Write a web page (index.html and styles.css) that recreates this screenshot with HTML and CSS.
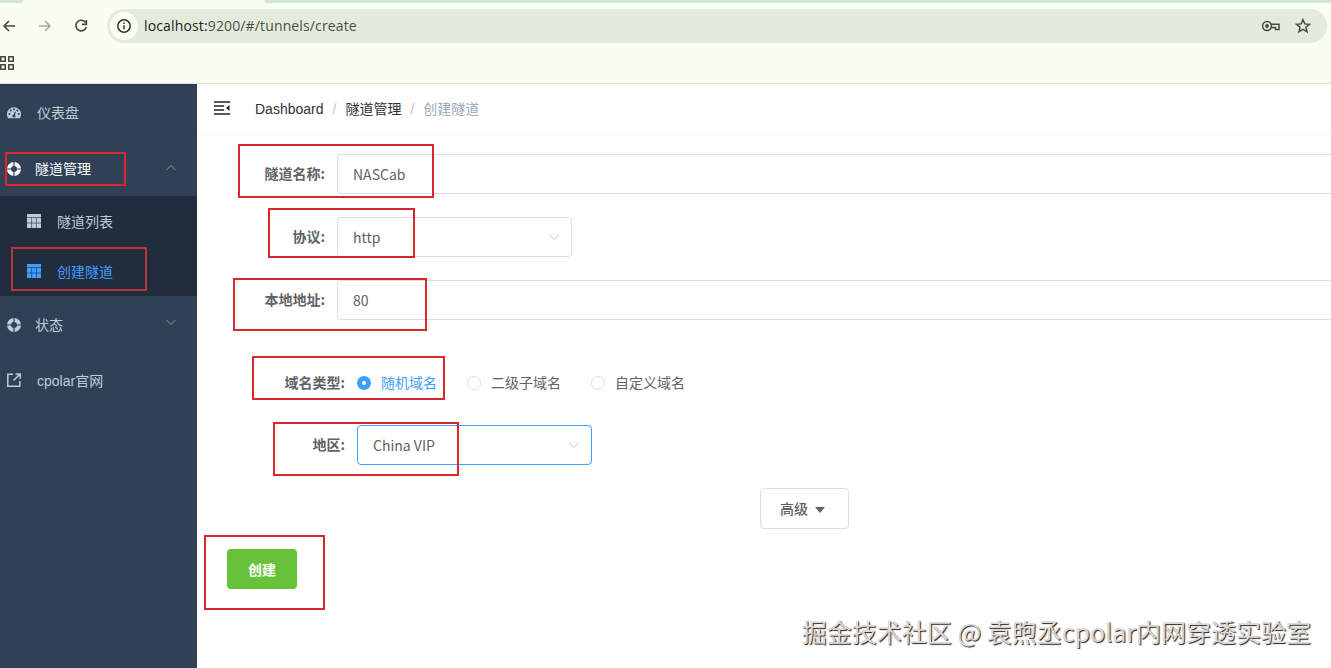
FILE: index.html
```html
<!DOCTYPE html>
<html lang="zh-CN">
<head>
    <meta charset="UTF-8">
    <meta name="viewport" content="width=device-width, initial-scale=1.0">
    <title>创建隧道</title>
    <link rel="stylesheet" href="styles.css">
</head>
<body>
    <div class="browser">
        <div class="tab-strip"><span class="tab"></span></div>
        <div class="toolbar">
            <svg class="nav-icon" viewBox="0 0 16 16"><path d="M14 8H3M8 3L3 8l5 5"/></svg>
            <svg class="nav-icon disabled" viewBox="0 0 16 16"><path d="M2 8h11M8 3l5 5-5 5"/></svg>
            <svg class="nav-icon" viewBox="0 0 16 16"><path d="M12.6 4.6A5.3 5.3 0 1 0 13.3 9M13.4 2v4.4H9"/></svg>
            <div class="address">
                <span class="site-info">
                    <svg viewBox="0 0 16 16"><circle cx="8" cy="8" r="6.2"/><path d="M8 7.2v4M8 4.5v1.5"/></svg>
                </span>
                <span class="url"><b>localhost:</b>9200/#/tunnels/create</span>
                <svg class="key-icon" viewBox="0 0 20 14"><circle cx="6" cy="7" r="4.4"/><circle class="dot" cx="6" cy="7" r="1.9"/><path d="M10 5.3h8v5.3h-3.6V8.6H10"/></svg>
                <svg class="star-icon" viewBox="0 0 16 16"><path d="M8 1.7l1.8 4.2 4.6.4-3.5 3 1.1 4.5L8 11.4l-4 2.4 1.1-4.5-3.5-3 4.6-.4z"/></svg>
            </div>
        </div>
        <div class="bookmarks">
            <svg viewBox="0 0 15 15"><path d="M.8 .8h4.400v4.400H.8zM8.800 .8h4.400v4.400H8.800zM.8 8.800h4.400v4.400H.8zM8.800 8.800h4.400v4.400H8.800z"/></svg>
        </div>
    </div>

    <div class="app">
        <div class="sidebar">
            <div class="menu-item wide">
                <svg class="menu-icon" viewBox="0 0 14 14"><path d="M0 8.3a7 7 0 0 1 14 0c0 1.4-.4 2.7-1.1 3.9H1.100A7 7 0 0 1 0 8.300z"/><g class="cut"><circle cx="2.4" cy="8" r="1"/><circle cx="3.8" cy="4.600" r="1"/><circle cx="7" cy="3.200" r="1"/><circle cx="10.300" cy="4.600" r="1"/><circle cx="11.700" cy="8" r="1"/><circle cx="7" cy="10" r="1.600"/></g><path class="cut-line" d="M7 10l1.200-4.500"/></svg>
                <span>仪表盘</span>
            </div>
            <div class="menu-item open">
                <svg class="menu-icon" viewBox="0 0 14 14"><circle class="ring" cx="7" cy="7" r="5"/><path class="cut-line" d="M7 0v4M7 10v4M0 7h4M10 7h4"/></svg>
                <span>隧道管理</span>
                <svg class="arrow" viewBox="0 0 12 12"><path d="M1.500 8L6 3.500 10.500 8"/></svg>
            </div>
            <div class="submenu">
                <div class="sub-item">
                    <svg class="menu-icon" viewBox="0 0 14 14"><path d="M0 0h14v14H0z"/><path class="grid-line" d="M0 3.500h14M0 9h14M4.600 3.500V14M9.400 3.500V14"/></svg>
                    <span>隧道列表</span>
                </div>
                <div class="sub-item active">
                    <svg class="menu-icon" viewBox="0 0 14 14"><path d="M0 0h14v14H0z"/><path class="grid-line" d="M0 3.500h14M0 9h14M4.600 3.500V14M9.400 3.500V14"/></svg>
                    <span>创建隧道</span>
                </div>
            </div>
            <div class="menu-item">
                <svg class="menu-icon" viewBox="0 0 14 14"><circle class="ring" cx="7" cy="7" r="5"/><path class="cut-line" d="M7 0v4M7 10v4M0 7h4M10 7h4"/></svg>
                <span>状态</span>
                <svg class="arrow" viewBox="0 0 12 12"><path d="M1.500 2L6 6.500 10.500 2"/></svg>
            </div>
            <div class="menu-item wide">
                <svg class="menu-icon link" viewBox="0 0 14 14"><path d="M6 1.200H.8v12h12V8M8.500 1h4.700v4.700M13 1L6.500 7.500"/></svg>
                <span>cpolar官网</span>
            </div>
        </div>

        <div class="main">
            <div class="navbar">
                <svg class="fold" viewBox="0 0 16 14"><path d="M0 1h16M0 5h10M0 9h10M0 13h16"/><path class="tri" d="M15.500 4v6L12 7z"/></svg>
                <div class="breadcrumb">
                    <span>Dashboard</span><i>/</i><span>隧道管理</span><i>/</i><span class="current">创建隧道</span>
                </div>
            </div>
            <div class="form">
                <div class="row">
                    <label>隧道名称:</label>
                    <div class="input long">NASCab</div>
                </div>
                <div class="row">
                    <label>协议:</label>
                    <div class="input select">http<svg class="arrow" viewBox="0 0 12 12"><path d="M1 3.500l5 5 5-5"/></svg></div>
                </div>
                <div class="row">
                    <label>本地地址:</label>
                    <div class="input long">80</div>
                </div>
                <div class="inner">
                    <div class="row">
                        <label>域名类型:</label>
                        <div class="radio checked"><span class="circle"></span><span class="text">随机域名</span></div>
                        <div class="radio"><span class="circle"></span><span class="text">二级子域名</span></div>
                        <div class="radio"><span class="circle"></span><span class="text">自定义域名</span></div>
                    </div>
                    <div class="row">
                        <label>地区:</label>
                        <div class="input select focus">China VIP<svg class="arrow" viewBox="0 0 12 12"><path d="M1 3.500l5 5 5-5"/></svg></div>
                    </div>
                </div>
                <div class="advanced"><span>高级</span><span class="caret"></span></div>
                <div class="create">创建</div>
            </div>
        </div>
    </div>

    <!-- highlight frames over the page -->
    <div class="mark mark-menu"></div>
    <div class="mark mark-submenu"></div>
    <div class="mark mark-name"></div>
    <div class="mark mark-protocol"></div>
    <div class="mark mark-address"></div>
    <div class="mark mark-domain"></div>
    <div class="mark mark-region"></div>
    <div class="mark mark-create"></div>
    <div class="watermark">掘金技术社区 @ 袁煦丞cpolar内网穿透实验室</div>
</body>
</html>
```
FILE: styles.css
```css
* {
    box-sizing: border-box;
}
body {
    margin: 0;
    width: 1331px;
    height: 668px;
    overflow: hidden;
    position: relative;
    background: #fff;
    font-family: "Liberation Sans", "Noto Sans CJK SC", sans-serif;
    font-size: 14px;
}
svg {
    fill: none;
    flex: none;
}

/* browser bars */
.browser {
    height: 84px;
    background: #f9fdf2;
    border-bottom: 1px solid #dde1da;
}
.tab-strip {
    height: 3px;
    background: #d3e8d4;
    padding-left: 22px;
}
.tab {
    display: block;
    width: 243px;
    height: 3px;
    background: #f9fdf2;
    border-radius: 3px 3px 0 0;
}
.toolbar {
    display: flex;
    align-items: center;
    height: 46px;
    padding: 0 4px 0 1px;
}
.nav-icon {
    width: 16px;
    height: 16px;
    margin-right: 20px;
    stroke: #41483f;
    stroke-width: 1.6;
}
.nav-icon.disabled {
    stroke: #a9aea5;
}
.nav-icon:nth-child(3) {
    margin-right: 18px;
}
.address {
    display: flex;
    align-items: center;
    flex: 1;
    height: 34px;
    border-radius: 17px;
    background: #e3ebdd;
    padding: 0 16px 0 3px;
}
.site-info {
    display: flex;
    align-items: center;
    justify-content: center;
    width: 28px;
    height: 28px;
    border-radius: 50%;
    background: #f9fdf2;
}
.site-info svg {
    width: 16px;
    height: 16px;
    stroke: #2e332c;
    stroke-width: 1.5;
}
.url {
    flex: 1;
    margin-left: 6px;
    padding-bottom: 2px;
    font-family: "Open Sans", "Noto Sans", sans-serif;
    font-size: 14px;
    letter-spacing: .14px;
    color: #4a5046;
}
.url b {
    font-weight: normal;
    color: #1d211b;
}
.key-icon, .star-icon {
    stroke: #454a42;
    stroke-width: 1.5;
}
.key-icon {
    width: 20px;
    height: 14px;
    margin-right: 14px;
}
.key-icon .dot {
    fill: #454a42;
    stroke: none;
}
.star-icon {
    width: 16px;
    height: 16px;
}
.bookmarks {
    padding-top: 7px;
}
.bookmarks svg {
    display: block;
    width: 15px;
    height: 15px;
    stroke: #454a42;
    stroke-width: 1.6;
}

.app {
    display: flex;
    height: 584px;
}

/* sidebar */
.sidebar {
    width: 197px;
    background: #304156;
    color: #bfcbd9;
}
.sidebar span {
    padding-bottom: 2px;
}
.menu-item {
    display: flex;
    align-items: center;
    height: 56px;
    padding: 2px 20px 0 7px;
}
.menu-icon {
    width: 14px;
    height: 14px;
    margin-right: 14px;
    fill: currentColor;
}
.wide .menu-icon {
    margin-right: 16px;
}
.menu-item .menu-icon.link {
    margin-bottom: 2px;
    fill: none;
    stroke: currentColor;
    stroke-width: 1.5;
}
.menu-icon .ring {
    fill: none;
    stroke: currentColor;
    stroke-width: 4;
}
.menu-icon .cut {
    fill: #304156;
}
.menu-icon .cut-line {
    stroke: #304156;
    stroke-width: 1.2;
}
.menu-icon .grid-line {
    stroke: #1f2d3d;
    stroke-width: .6;
}
.menu-item.open {
    color: #fff;
}
.arrow {
    width: 12px;
    height: 12px;
    margin-left: auto;
    stroke: #909399;
    stroke-width: 1;
}
.sidebar .arrow {
    margin-bottom: 2px;
}
.submenu {
    background: #1f2d3d;
}
.sub-item {
    display: flex;
    align-items: center;
    height: 50px;
    padding-left: 27px;
}
.sub-item .menu-icon {
    margin-right: 16px;
}
.sub-item span {
    padding-bottom: 1px;
}
.sub-item.active {
    color: #409eff;
}

/* main area */
.main {
    flex: 1;
    min-width: 0;
}
.navbar {
    display: flex;
    align-items: center;
    height: 51px;
    padding-left: 17px;
    border-bottom: 1px solid #f4f5f6;
}
.fold {
    width: 16px;
    height: 14px;
    margin-bottom: 2px;
    stroke: #222;
    stroke-width: 1.7;
}
.fold .tri {
    fill: #222;
    stroke: none;
}
.breadcrumb {
    margin-left: 25px;
    padding-bottom: 2px;
    color: #303133;
}
.breadcrumb i {
    margin: 0 9px;
    color: #c0c4cc;
    font-style: normal;
}
.breadcrumb .current {
    color: #97a8be;
}
.form {
    padding: 19px 0 0 30px;
    font-family: "Noto Sans CJK SC", sans-serif;
    color: #606266;
}
.row {
    display: flex;
    align-items: center;
    height: 40px;
    margin-bottom: 23px;
}
.row label {
    width: 98px;
    margin-right: 12px;
    padding-bottom: 2px;
    text-align: right;
    font-weight: 700;
}
.input {
    display: flex;
    align-items: center;
    height: 40px;
    padding: 0 11px 0 15px;
    border: 1px solid #dcdfe6;
    border-radius: 4px;
}
.input .arrow {
    stroke: #c0c4cc;
}
.input.long {
    flex: 1;
    border-right: none;
    border-radius: 4px 0 0 4px;
}
.input.select {
    width: 235px;
}
.input.focus {
    border-color: #409eff;
}
.inner {
    padding: 20px 0 0 20px;
}
.inner .row {
    margin-bottom: 22px;
}
.radio {
    display: flex;
    align-items: center;
    margin-right: 30px;
}
.radio .text {
    padding-bottom: 2px;
}
.circle {
    width: 14px;
    height: 14px;
    margin-right: 10px;
    border: 1px solid #dcdfe6;
    border-radius: 50%;
}
.checked {
    color: #409eff;
}
.checked .circle {
    border: 5px solid #409eff;
}
.advanced {
    display: flex;
    align-items: center;
    justify-content: center;
    width: 89px;
    height: 41px;
    margin: 1px 0 20px 533px;
    padding: 0 4px 1px 0;
    border: 1px solid #dcdfe6;
    border-radius: 4px;
    font-weight: 500;
}
.inner + .advanced {
    margin-top: 23px;
}
.inner .row:last-child {
    margin-bottom: 0;
}
.caret {
    margin: 3px 0 0 7px;
    border: 5px solid transparent;
    border-top: 6px solid #606266;
    border-bottom: none;
}
.create {
    width: 70px;
    height: 40px;
    border-radius: 4px;
    background: #67c23a;
    color: #fff;
    font-weight: 700;
    line-height: 40px;
    text-align: center;
}

/* red frames */
.mark {
    position: absolute;
    border: 2px solid #d9272e;
}
.mark-menu { left: 5px; top: 152px; width: 121px; height: 34px; }
.mark-submenu { left: 11px; top: 247px; width: 136px; height: 44px; border-color: #b9343f; }
.mark-name { left: 238px; top: 144px; width: 196px; height: 54px; }
.mark-protocol { left: 268px; top: 208px; width: 147px; height: 50px; }
.mark-address { left: 233px; top: 278px; width: 194px; height: 53px; }
.mark-domain { left: 252px; top: 356px; width: 193px; height: 44px; }
.mark-region { left: 273px; top: 422px; width: 186px; height: 54px; }
.mark-create { left: 204px; top: 535px; width: 121px; height: 75px; }

.watermark {
    position: absolute;
    right: 20px;
    bottom: 18px;
    font-family: "Noto Sans CJK SC", sans-serif;
    font-size: 25px;
    line-height: 37px;
    white-space: nowrap;
    color: #dadada;
    text-shadow: 1px 1px 1px #222;
}
```
